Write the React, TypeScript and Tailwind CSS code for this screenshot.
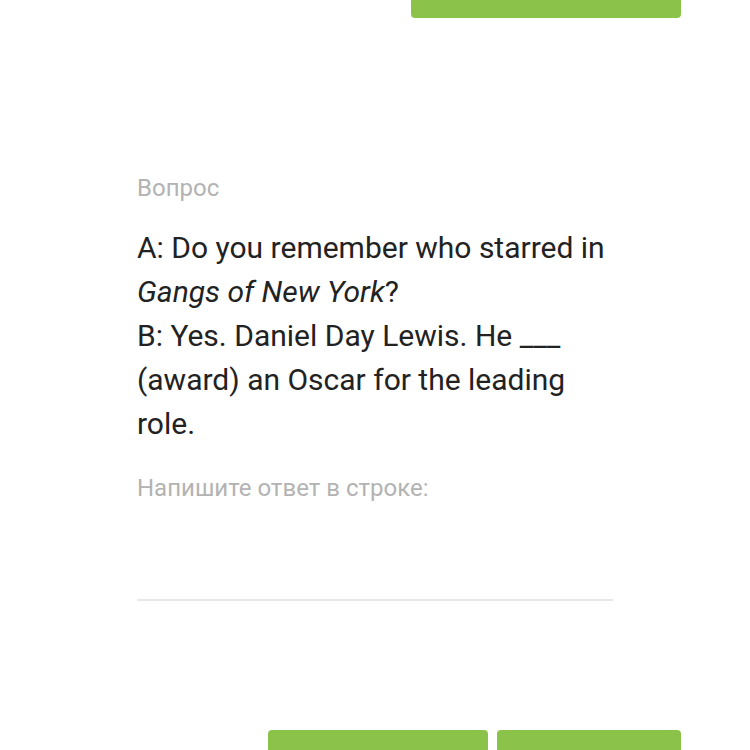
export default function App() {
  return (
    <div
      className="w-[750px] h-[750px] overflow-hidden bg-white flex flex-col"
      style={{ fontFamily: "Roboto, 'Noto Sans', sans-serif" }}
    >
      <div className="flex justify-end pr-[69px]">
        <div className="w-[270px] h-[18px] bg-[#8bc34a] rounded-b-[4px]" />
      </div>

      <div className="pl-[137px] pt-[155px]">
        <div className="w-[480px]">
          <div className="text-[24px] leading-[30px] text-[#b3b3b3]">Вопрос</div>
          <div className="mt-[23px] text-[30px] leading-[44px] text-[#222222]">
            A: Do you remember who starred in <i>Gangs of New York</i>?
            <br />
            B: Yes. Daniel Day Lewis. He ___ (award) an Oscar for the leading role.
          </div>
          <div className="mt-[27px] text-[24px] leading-[30px] text-[#b3b3b3]">
            Напишите ответ в строке:
          </div>
          <div className="mt-[96px] h-[2px] w-[476px] bg-[#e8e8e8]" />
        </div>
      </div>

      <div className="mt-auto flex justify-end gap-[9px] pr-[69px]">
        <div className="w-[220px] h-[20px] bg-[#8bc34a] rounded-t-[4px]" />
        <div className="w-[184px] h-[20px] bg-[#8bc34a] rounded-t-[4px]" />
      </div>
    </div>
  );
}
